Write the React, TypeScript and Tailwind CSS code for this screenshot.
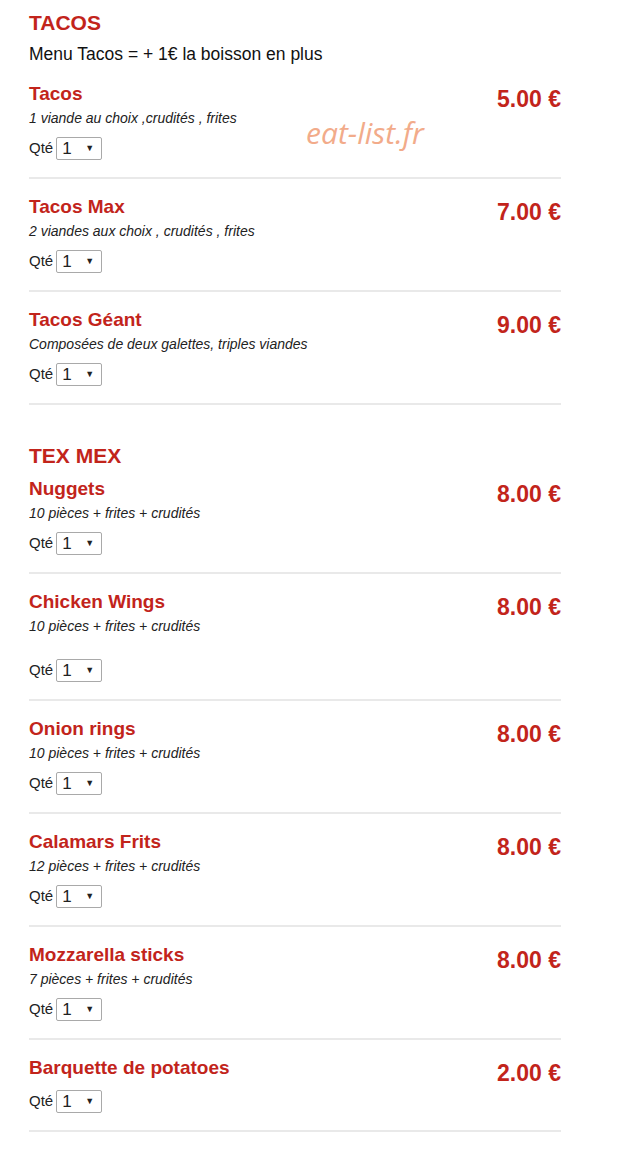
import React from 'react';

type Item = { name: string; desc?: string; price: string; gap?: boolean };

const sections: { title: string; note?: string; items: Item[] }[] = [
  {
    title: 'TACOS',
    note: 'Menu Tacos = + 1€ la boisson en plus',
    items: [
      { name: 'Tacos', desc: '1 viande au choix ,crudités , frites', price: '5.00 €' },
      { name: 'Tacos Max', desc: '2 viandes aux choix , crudités , frites', price: '7.00 €' },
      { name: 'Tacos Géant', desc: 'Composées de deux galettes, triples viandes', price: '9.00 €' },
    ],
  },
  {
    title: 'TEX MEX',
    items: [
      { name: 'Nuggets', desc: '10 pièces + frites + crudités', price: '8.00 €' },
      { name: 'Chicken Wings', desc: '10 pièces + frites + crudités', price: '8.00 €', gap: true },
      { name: 'Onion rings', desc: '10 pièces + frites + crudités', price: '8.00 €' },
      { name: 'Calamars Frits', desc: '12 pièces + frites + crudités', price: '8.00 €' },
      { name: 'Mozzarella sticks', desc: '7 pièces + frites + crudités', price: '8.00 €' },
      { name: 'Barquette de potatoes', price: '2.00 €' },
    ],
  },
];

function Qty() {
  return (
    <div className="flex items-center gap-[3px] text-[15px] text-[#222]">
      <span>Qté</span>
      <div className="flex items-center justify-between w-[46px] h-[23px] border border-[#a9a9a9] rounded-[2px] bg-white pl-[5px] pr-[7px]">
        <span className="text-[17px] leading-none">1</span>
        <span className="text-[9px] leading-none">▼</span>
      </div>
    </div>
  );
}

function MenuItem({ item, first }: { item: Item; first: boolean }) {
  return (
    <div className={`flex justify-between border-b-2 border-[#e9e9e9] pb-[17px] ${first ? 'pt-0' : 'pt-[17px]'}`}>
      <div>
        <div className="text-[19px] leading-[22px] font-bold text-[#c2241b]">{item.name}</div>
        {item.desc && <div className="text-[14px] leading-[17px] italic text-[#222] mt-[5px]">{item.desc}</div>}
        <div className={item.gap ? 'mt-[24px]' : item.desc ? 'mt-[10px]' : 'mt-[11px]'}>
          <Qty />
        </div>
      </div>
      <div className="text-[23px] leading-[26px] font-bold text-[#c2241b] pt-[3px]">{item.price}</div>
    </div>
  );
}

export default function App() {
  return (
    <div className="relative bg-white min-h-[1160px] w-[618px] font-['Liberation_Sans',Arial,sans-serif]">
      <div className="pl-[29px] w-[561px] pt-[11px]">
        {sections.map((s, si) => (
          <div key={s.title} className={si > 0 ? 'mt-[39px]' : ''}>
            <h2 className="text-[21px] leading-[24px] font-bold text-[#c2241b]">{s.title}</h2>
            {s.note && <p className="text-[17.5px] leading-[20px] text-[#111] mt-[9px]">{s.note}</p>}
            <div className={s.note ? 'mt-[19px]' : 'mt-[10px]'}>
              {s.items.map((it, i) => (
                <MenuItem key={it.name} item={it} first={i === 0} />
              ))}
            </div>
          </div>
        ))}
      </div>
      <div className="absolute left-[306px] top-[118px] text-[30px] leading-none italic text-[#f2ab8a] font-['Open_Sans',sans-serif]">
        eat-list.fr
      </div>
    </div>
  );
}
